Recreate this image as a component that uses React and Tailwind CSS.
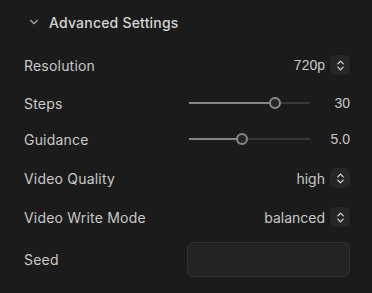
import { ChevronDown, ChevronsUpDown } from "lucide-react";

const labelCls = "text-[14px] text-[#c9c9c9] tracking-[0.2px]";

const SelectRow = ({ label, value, className = "" }) => (
  <div className={`flex items-center justify-between h-[36px] ${className}`}>
    <span className={labelCls}>{label}</span>
    <div className="flex items-center gap-[5px]">
      <span className="text-[14px] text-[#c8c8c8]">{value}</span>
      <div className="w-[20px] h-[20px] rounded-[5px] bg-[#262626] flex items-center justify-center">
        <ChevronsUpDown size={13} strokeWidth={2.2} className="text-[#e0e0e0]" />
      </div>
    </div>
  </div>
);

const SliderRow = ({ label, value, pct, className = "" }) => (
  <div className={`flex items-center justify-between h-[36px] ${className}`}>
    <span className={labelCls}>{label}</span>
    <div className="flex items-center">
      <div className="relative w-[121px] h-[12px] flex items-center">
        <div className="h-[2px] bg-[#858585]" style={{ width: `${pct}%` }} />
        <div className="h-[2px] flex-1 bg-[#383838]" />
        <div
          className="absolute top-0 w-[12px] h-[12px] rounded-full border-2 border-[#8a8a8a] bg-[#262626]"
          style={{ left: `calc(${pct}% - 6px)` }}
        />
      </div>
      <span
        className="w-[40px] text-right text-[14px] text-[#c8c8c8]"
        style={{ fontFamily: '"Liberation Sans", Arial, sans-serif' }}
      >
        {value}
      </span>
    </div>
  </div>
);

export default function App() {
  return (
    <div className="w-[372px] h-[293px] bg-[#1b1b1b] pl-[24px] pr-[22px] font-['Inter',sans-serif] overflow-hidden">
      <div className="flex items-center h-[44px] pl-[3px]">
        <ChevronDown size={14} strokeWidth={2} className="text-[#a8a8a8]" />
        <span className="ml-[8px] text-[14px] font-medium text-[#d4d4d4] tracking-[0.2px]">Advanced Settings</span>
      </div>
      <div className="flex flex-col">
        <SelectRow label="Resolution" value={<span style={{ fontFamily: '"Liberation Sans", Arial, sans-serif' }}>720p</span>} className="mt-[3px]" />
        <SliderRow label="Steps" value="30" pct={71} className="mt-[2px]" />
        <SliderRow label="Guidance" value="5.0" pct={44} />
        <SelectRow label="Video Quality" value="high" className="mt-[3px]" />
        <SelectRow label="Video Write Mode" value="balanced" className="mt-[3px]" />
        <div className="flex items-center justify-between h-[36px] mt-[6px]">
          <span className={labelCls}>Seed</span>
          <input className="w-[163px] h-[35px] rounded-[6px] bg-[#232323] border border-[#303030] outline-none" />
        </div>
      </div>
    </div>
  );
}
